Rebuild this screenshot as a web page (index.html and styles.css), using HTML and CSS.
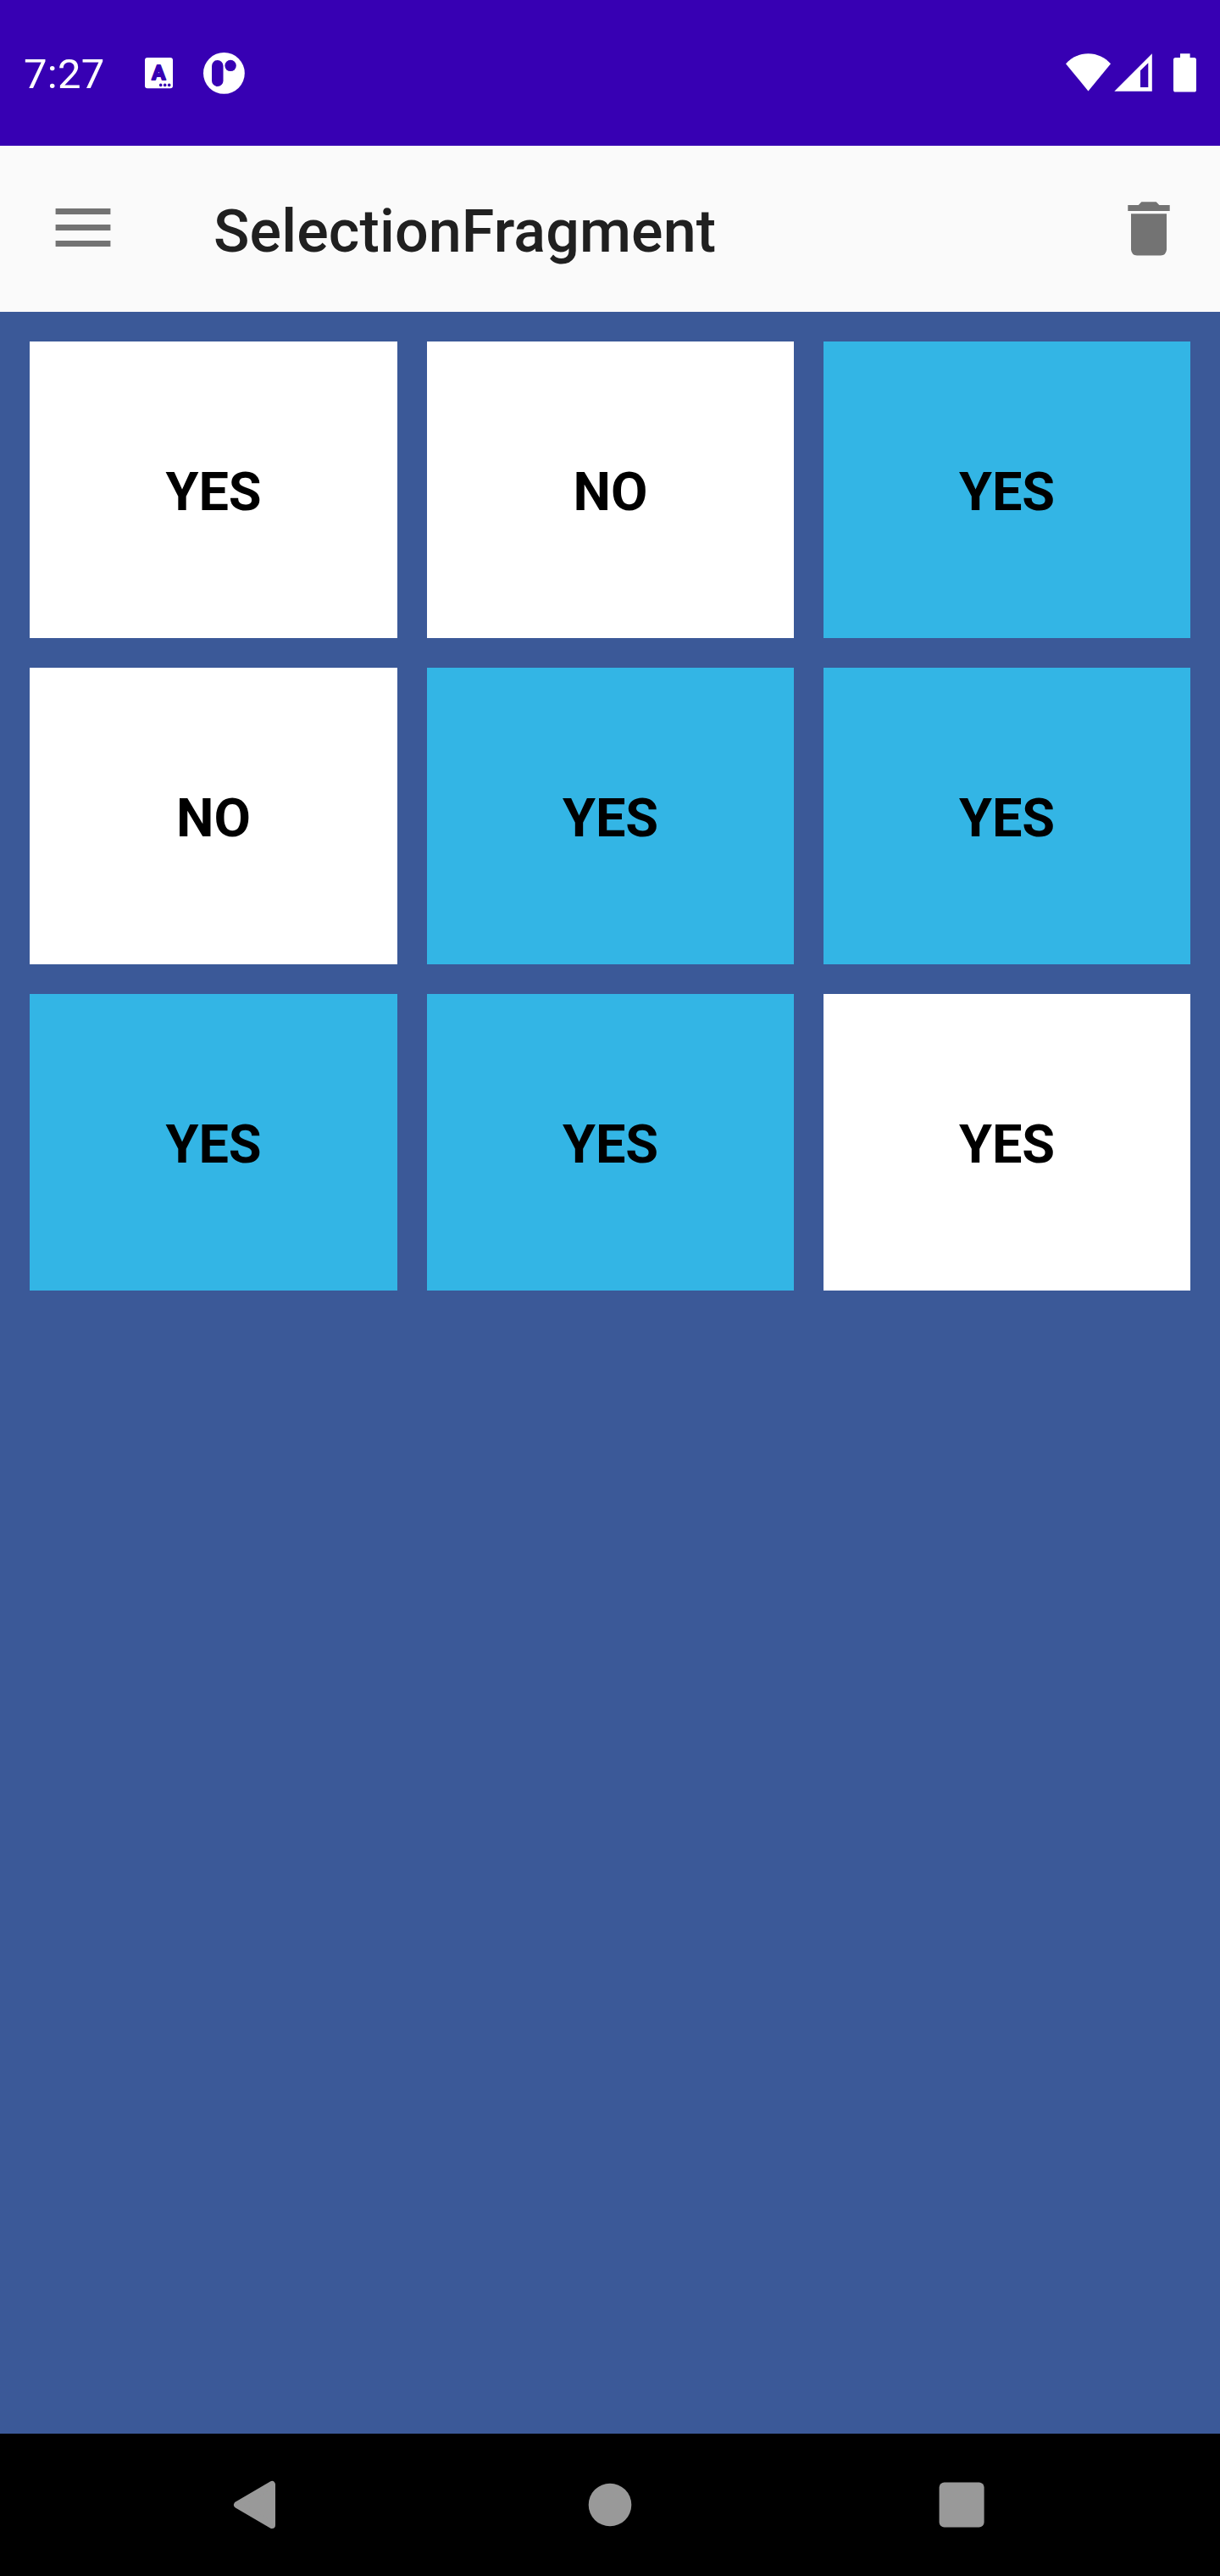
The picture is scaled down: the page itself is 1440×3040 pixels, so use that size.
FILE: index.html
```html
<!DOCTYPE html>
<html lang="en">
<head>
<meta charset="utf-8">
<title>SelectionFragment</title>
<link rel="stylesheet" href="styles.css">
</head>
<body>
<div class="screen">
  <div class="status-bar">
    <span class="clock">7:27</span>
    <svg class="notifications" width="120" height="52" viewBox="170 60 120 52">
      <rect x="171" y="68" width="33" height="36.3" rx="3" fill="#fff"/>
      <text class="badge-letter" x="187.3" y="94" text-anchor="middle">A</text>
      <g fill="#3700b3">
        <circle cx="189.7" cy="100.4" r="1.8"/>
        <circle cx="194.7" cy="100.4" r="1.8"/>
        <circle cx="199.7" cy="100.4" r="1.8"/>
      </g>
      <circle cx="264.4" cy="86.4" r="24.4" fill="#fff"/>
      <rect x="250" y="71" width="13.5" height="31" rx="6.75" fill="#3700b3"/>
      <circle cx="272.1" cy="77.4" r="6.7" fill="#3700b3"/>
    </svg>
    <svg class="system-icons" width="160" height="52" viewBox="1255 60 160 52" fill="#fff">
      <path d="M1284.5 107.5L1258 75.2C1264.5 68 1274 63.2 1284.5 63.2S1304.5 68 1311 75.2Z"/>
      <path fill-rule="evenodd" d="M1315.3 107.7H1359.8V63.3ZM1346 83.2L1355.300 74.3V103H1346Z"/>
      <path d="M1393 63.2H1404.6V68H1409.5Q1412 68 1412 70.5V106Q1412 108.6 1409.5 108.6H1387.5Q1385 108.6 1385 106V70.5Q1385 68 1387.5 68H1393Z"/>
    </svg>
  </div>
  <header class="app-bar">
    <svg class="menu" width="66" height="46" viewBox="65 246 66 46" fill="#737373">
      <path d="M65.6 246H130.4V253H65.6ZM65.6 265H130.4V272H65.6ZM65.6 284H130.4V291H65.6Z"/>
    </svg>
    <h1 class="title">SelectionFragment</h1>
    <svg class="delete" width="50" height="64" viewBox="1331 238 50 64" fill="#737373">
      <path d="M1331.3 242H1343.8L1347.3 238.3H1364.7L1368.3 242H1380.7V249H1331.3Z"/>
      <path d="M1335 252.3H1377V294.5Q1376.5 301 1370 301.5H1342Q1335.5 301 1335 294.5Z"/>
    </svg>
  </header>
  <main class="content">
    <div class="grid">
      <div class="cell">YES</div>
      <div class="cell">NO</div>
      <div class="cell selected">YES</div>
      <div class="cell">NO</div>
      <div class="cell selected">YES</div>
      <div class="cell selected">YES</div>
      <div class="cell selected">YES</div>
      <div class="cell selected">YES</div>
      <div class="cell">YES</div>
    </div>
  </main>
  <nav class="nav-bar">
    <svg width="60" height="60" viewBox="0 0 60 60"><path class="nav-shape back" d="M5 30L46 6V54Z"/></svg>
    <svg width="60" height="60" viewBox="0 0 60 60"><circle class="nav-shape" cx="30" cy="30" r="25.3"/></svg>
    <svg width="60" height="60" viewBox="0 0 60 60"><rect class="nav-shape" x="3.6" y="3.4" width="53" height="53" rx="6"/></svg>
  </nav>
</div>
</body>
</html>
```
FILE: styles.css
```css
* {
  box-sizing: border-box;
}

body {
  margin: 0;
  font-family: Roboto, "Liberation Sans", sans-serif;
}

svg {
  display: block;
  flex: none;
}

.screen {
  display: flex;
  flex-direction: column;
  width: 1440px;
  height: 3040px;
}

.status-bar {
  display: flex;
  align-items: center;
  height: 172px;
  padding: 0 25px 0 28px;
  background: #3700b3;
}

.clock {
  width: 142px;
  padding-top: 4px;
  color: #fff;
  font-size: 49px;
  letter-spacing: 0.3px;
  line-height: 58px;
}

.badge-letter {
  fill: #3700b3;
  stroke: #3700b3;
  stroke-width: 2px;
  stroke-linejoin: round;
  font-size: 24px;
  font-weight: 700;
}

.system-icons {
  margin-left: auto;
}

.app-bar {
  display: flex;
  align-items: center;
  height: 196px;
  padding: 0 59px 0 65px;
  background: #fafafa;
}

.menu {
  margin-bottom: 2px;
}

.title {
  flex: 1;
  margin: 0 0 0 121px;
  padding-top: 6px;
  color: #202020;
  font-size: 70px;
  font-weight: 500;
  letter-spacing: 0.14px;
  line-height: 82px;
}

.content {
  flex: 1;
  padding: 35px;
  background: #3b5998;
}

.grid {
  display: grid;
  grid-template-columns: 434px 433px 433px;
  grid-auto-rows: 350px;
  gap: 35px;
}

.cell {
  display: flex;
  align-items: center;
  justify-content: center;
  padding-top: 5px;
  background: #fff;
  color: #000;
  font-size: 63px;
  font-weight: 700;
  line-height: 74px;
}

.cell.selected {
  background: #33b5e5;
}

.nav-bar {
  display: flex;
  align-items: center;
  justify-content: space-between;
  height: 168px;
  padding: 0 275px;
  background: #000;
}

.nav-shape {
  fill: #999;
}

.back {
  stroke: #999;
  stroke-width: 8px;
  stroke-linejoin: round;
}
```
